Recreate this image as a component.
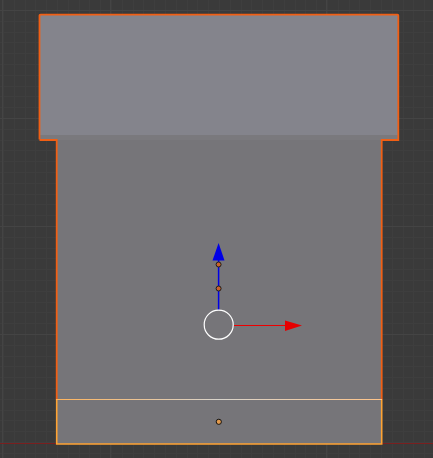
const MINOR = Array.from({ length: 42 }, (_, i) => i * 10.8);

export default function App() {
  return (
    <div className="h-[458px] w-[433px] overflow-hidden bg-[#3a3a3a]">
      <svg width="433" height="458" viewBox="0 0 433 458" className="block">
        <defs>
          <linearGradient id="edge" x1="0" y1="0" x2="1" y2="0">
            <stop offset="0" stopColor="#ffb45c" />
            <stop offset="0.5" stopColor="#d8d4cc" />
            <stop offset="1" stopColor="#ffc488" />
          </linearGradient>
        </defs>

        {/* grid */}
        {MINOR.map((p) => (
          <g key={p} stroke="#3e3e3e" strokeWidth="1">
            <line x1={Math.round(3 + p) + 0.5} y1="0" x2={Math.round(3 + p) + 0.5} y2="458" />
            <line x1="0" y1={Math.round(10 + p) + 0.5} x2="433" y2={Math.round(10 + p) + 0.5} />
          </g>
        ))}
        {[2.5, 110.5, 326.5].map((x) => (
          <line key={x} x1={x} y1="0" x2={x} y2="458" stroke="#444444" />
        ))}
        {[10.5, 118.5, 226.5, 334.5].map((y) => (
          <line key={y} x1="0" y1={y} x2="433" y2={y} stroke="#444444" />
        ))}
        <line x1="0" y1="443.5" x2="433" y2="443.5" stroke="#7a1f1f" />

        {/* mesh faces */}
        <rect x="57" y="135" width="325" height="309" fill="#767579" />
        <rect x="40" y="15" width="358" height="120" fill="#84848c" />
        <rect x="40" y="135" width="358" height="5" fill="#7a797d" />

        {/* selected outline */}
        <path
          d="M39.5 139.5V15.5Q39.5 14.7 40.5 14.7H397.5Q398.3 14.7 398.3 15.5V140H381.7V400M56.7 400V140H39.5"
          fill="none"
          stroke="#f15f14"
          strokeWidth="1.8"
        />
        <path d="M56.7 399.5V444H381.7V399.5" fill="none" stroke="#ffa333" strokeWidth="1.6" />
        <rect x="56" y="399" width="326" height="1" fill="url(#edge)" />

        {/* manipulator */}
        <line x1="218.6" y1="258" x2="218.6" y2="310" stroke="#0000e6" strokeWidth="1.5" />
        <path d="M218.6 243L224.5 260.5H212.5Z" fill="#0000e6" />
        <line x1="234" y1="325.5" x2="286" y2="325.5" stroke="#ee0000" strokeWidth="1" />
        <path d="M302 325.5L285 320.5V331Z" fill="#e60000" />
        <circle cx="218.7" cy="324.7" r="14.5" fill="none" stroke="#ffffff" strokeWidth="1.2" />

        {/* vertices */}
        <circle cx="218.6" cy="264.5" r="2.5" fill="#c9622c" stroke="#1c1c1c" />
        <circle cx="218.6" cy="288.5" r="2.5" fill="#c9622c" stroke="#1c1c1c" />
        <circle cx="218.8" cy="421.8" r="2.6" fill="#e39a4c" stroke="#111111" />
      </svg>
    </div>
  );
}
